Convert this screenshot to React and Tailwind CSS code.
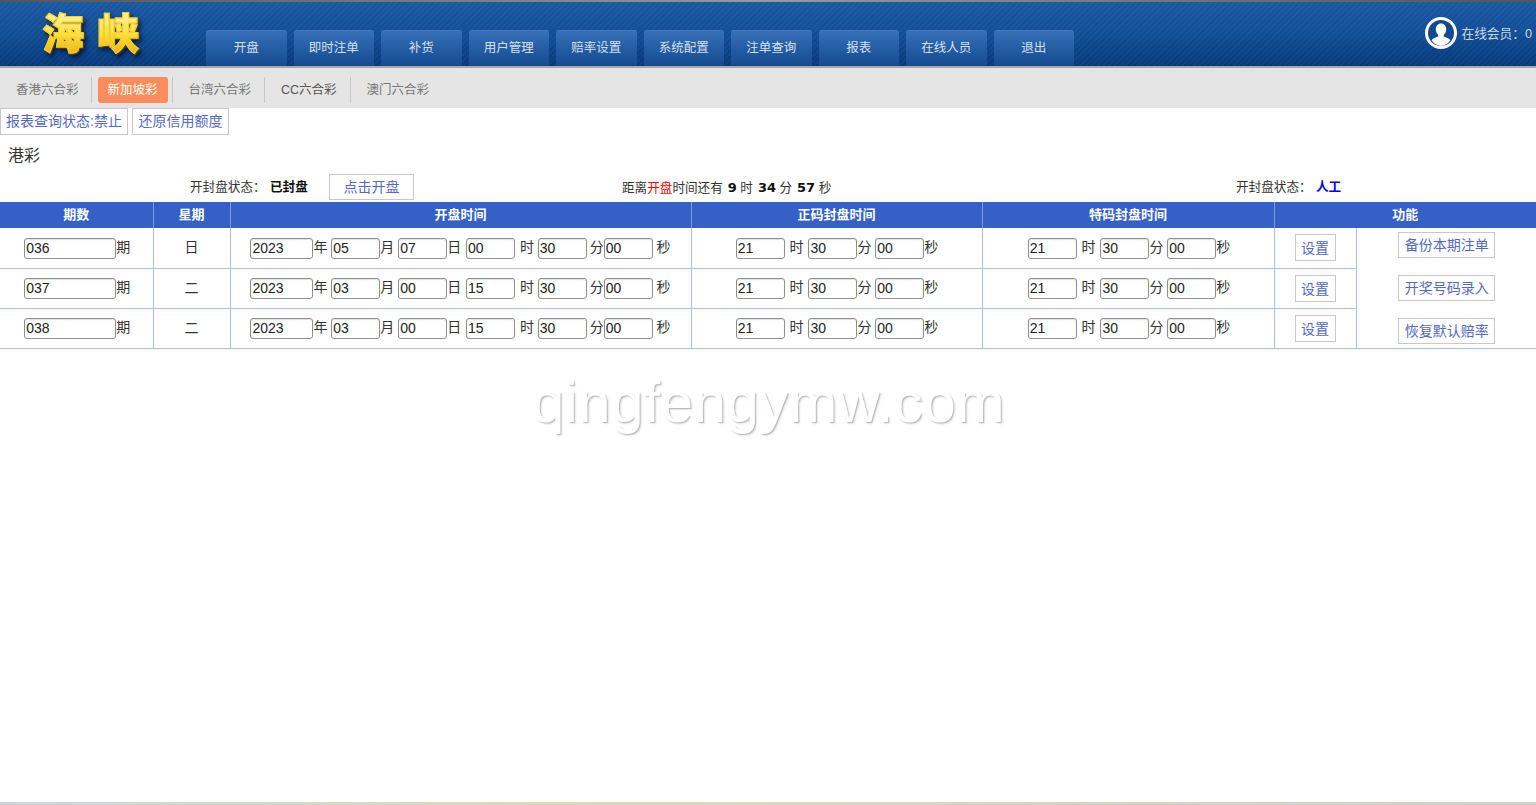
import React from 'react';

const navItems = ['开盘', '即时注单', '补货', '用户管理', '赔率设置', '系统配置', '注单查询', '报表', '在线人员', '退出'];

const lotteries = [
  { name: '香港六合彩', cls: 'ml-[16px] mr-[12px] text-[#777]' },
  { name: '新加坡彩', active: true },
  { name: '台湾六合彩', cls: 'ml-[16px] mr-[13px] text-[#777]' },
  { name: 'CC六合彩', cls: 'ml-[16px] mr-[13px] text-[#555]' },
  { name: '澳门六合彩', cls: 'ml-[16px] text-[#777]' },
];

const rows = [
  { no: '036', week: '日', year: '2023', month: '05', day: '07', hour: '00', action: '备份本期注单' },
  { no: '037', week: '二', year: '2023', month: '03', day: '00', hour: '15', action: '开奖号码录入' },
  { no: '038', week: '二', year: '2023', month: '03', day: '00', hour: '15', action: '恢复默认赔率' },
];

const cellBorder = 'border border-[#a9bff2] border-t-0 p-0 text-center align-middle';
const countdown = "font-['DejaVu_Sans'] text-[13px] text-[#111] ml-[1.5px]";

function Field({ value, width }) {
  return (
    <input
      readOnly
      value={value}
      className={`${width} h-[21px] rounded-[3px] border border-[#8f8f8f] bg-white px-[1px] align-middle text-[14px] text-[#222] shadow-[inset_0_1px_1px_rgba(0,0,0,0.12)] outline-none`}
    />
  );
}

function LinkButton({ children, cls }) {
  return (
    <span className={`inline-block border border-[#c8c8c8] bg-white text-center text-[14px] text-[#5468c8] ${cls}`}>
      {children}
    </span>
  );
}

function CloseTime() {
  return (
    <>
      <Field value="21" width="w-[49px]" /> <span className="mx-[1px]">时</span> <Field value="30" width="w-[49px]" />分{' '}
      <Field value="00" width="w-[49px]" />秒
    </>
  );
}

export default function App() {
  return (
    <div className="relative flex h-[805px] flex-col overflow-hidden bg-white font-['Liberation_Sans','Noto_Sans_CJK_SC',sans-serif] text-[14px] text-[#333]">
      {/* Header */}
      <div className="h-[2px] bg-gradient-to-r from-[#555] via-[#999] to-[#555]" />
      <header className="flex h-[64px] bg-[repeating-linear-gradient(135deg,rgba(255,255,255,0.025)_0_2px,rgba(0,0,0,0.025)_2px_4px),linear-gradient(180deg,#1a5aa6_0%,#124f98_50%,#063a7c_100%)]">
        <div className="w-[206px] shrink-0 pl-[42px] pt-[8px]">
          <span className="bg-gradient-to-b from-[#fff3a0] via-[#fbdf3a] to-[#e8a90c] bg-clip-text text-[42px] font-black leading-[50px] tracking-[13px] text-transparent [-webkit-text-stroke:1px_#f4cf2a] [filter:drop-shadow(1px_1px_0_#5a4310)_drop-shadow(2px_3px_2px_rgba(0,0,30,0.6))]">
            海峡
          </span>
        </div>
        <nav className="flex items-end gap-[7px]">
          {navItems.map((item) => (
            <div
              key={item}
              className="flex h-[36px] w-[80.5px] items-center justify-center rounded-t-[3px] border-t border-[#3f78bd] bg-gradient-to-b from-[#3670b7] to-[#134a90] text-[12.5px] text-[#d5e0ee]"
            >
              {item}
            </div>
          ))}
        </nav>
        <div className="ml-auto flex items-start pr-[4px] pt-[15px]">
          <svg width="32" height="32" viewBox="0 0 32 32" className="mr-[5px]">
            <circle cx="16" cy="16" r="14.5" fill="#13498f" stroke="#fff" strokeWidth="3" />
            <path
              d="M16 6.5c-3.2 0-5.2 2.5-5.2 5.8 0 2.4 1 4.4 2.4 5.7v1.6c-2.6 1-5.4 2-6.6 3.6A13 13 0 0 0 16 29a13 13 0 0 0 9.4-5.8c-1.2-1.6-4-2.6-6.6-3.6V18c1.4-1.3 2.4-3.3 2.4-5.7 0-3.3-2-5.8-5.2-5.8z"
              fill="#fff"
            />
          </svg>
          <span className="pt-[8px] text-[12.7px] text-[#c9d5e6]">在线会员：0</span>
        </div>
      </header>
      <div className="h-[2px] bg-[#a8a8a8]" />

      {/* Lottery tabs */}
      <div className="flex h-[40px] items-center bg-[#e5e5e5] pt-[4px] text-[12.5px]">
        {lotteries.map((l, i) => (
          <React.Fragment key={l.name}>
            {l.active ? (
              <span className="ml-[6px] mr-[4px] flex h-[26px] w-[70px] items-center justify-center rounded-[3px] bg-[#f98d5b] text-white">
                {l.name}
              </span>
            ) : (
              <span className={l.cls}>{l.name}</span>
            )}
            {i < lotteries.length - 1 && <span className="h-[26px] w-px bg-[#c8c8c8]" />}
          </React.Fragment>
        ))}
      </div>

      {/* Actions */}
      <div className="flex gap-[4px]">
        <LinkButton cls="h-[27px] w-[128px] leading-[25px]">报表查询状态:禁止</LinkButton>
        <LinkButton cls="h-[27px] w-[97px] leading-[25px]">还原信用额度</LinkButton>
      </div>
      <div className="pl-[8px] pt-[9px] text-[16px] leading-[24px] text-[#333]">港彩</div>

      {/* Status row */}
      <div className="mt-[6px] flex h-[26px] items-center text-[12.6px]">
        <span className="ml-[190px] w-[80px] pt-[1px]">开封盘状态：</span>
        <span className="w-[59px] pt-[1px] font-bold text-[#111]">已封盘</span>
        <LinkButton cls="h-[26px] w-[85px] leading-[24px]">点击开盘</LinkButton>
        <span className="ml-[208px] w-[614px] pt-[1px]">
          距离<span className="text-[#f00]">开盘</span>时间还有 <b className={countdown}>9</b> 时{' '}
          <b className={countdown}>34</b> 分 <b className={countdown}>57</b> 秒
        </span>
        <span className="w-[80px] pt-[1px]">开封盘状态：</span>
        <span className="pt-[1px] font-bold text-[#0000f0]">人工</span>
      </div>

      {/* Schedule table */}
      <table className="mt-[2px] w-[1536px] table-fixed border-collapse">
        <colgroup>
          <col className="w-[153px]" />
          <col className="w-[77px]" />
          <col className="w-[461px]" />
          <col className="w-[291px]" />
          <col className="w-[292px]" />
          <col className="w-[82px]" />
          <col className="w-[180px]" />
        </colgroup>
        <thead>
          <tr className="h-[26px] bg-[#3560c6] text-[13px] font-bold text-white">
            <th className="border-r border-[#7f9be0] p-0">期数</th>
            <th className="border-r border-[#7f9be0] p-0">星期</th>
            <th className="border-r border-[#7f9be0] p-0">开盘时间</th>
            <th className="border-r border-[#7f9be0] p-0">正码封盘时间</th>
            <th className="border-r border-[#7f9be0] p-0">特码封盘时间</th>
            <th colSpan={2} className="p-0">功能</th>
          </tr>
        </thead>
        <tbody>
          {rows.map((row, i) => (
            <tr key={row.no} className="h-[40px]">
              <td className={`${cellBorder} border-l-0 pl-[2px]`}>
                <Field value={row.no} width="w-[92px]" />期
              </td>
              <td className={cellBorder}>{row.week}</td>
              <td className={cellBorder}>
                <Field value={row.year} width="w-[63px]" />年 <Field value={row.month} width="w-[49px]" />月{' '}
                <Field value={row.day} width="w-[49px]" />
                <span className="mr-[1px]">日</span> <Field value={row.hour} width="w-[49px]" />{' '}
                <span className="ml-[1px]">时</span> <Field value="30" width="w-[49px]" />{' '}
                <span className="ml-[-1px]">分</span>
                <Field value="00" width="w-[49px]" /> 秒
              </td>
              <td className={`${cellBorder} pl-[1px]`}>
                <CloseTime />
              </td>
              <td className={`${cellBorder} pl-[2px]`}>
                <CloseTime />
              </td>
              <td className={cellBorder}>
                <LinkButton cls="h-[27px] w-[41px] align-middle leading-[26px]">设置</LinkButton>
              </td>
              {i === 0 && (
                <td rowSpan={3} className={`${cellBorder} border-r-0`}>
                  <div className="flex flex-col items-center gap-[17px] pl-[1px]">
                    {rows.map((r) => (
                      <LinkButton key={r.action} cls="h-[26px] w-[97px] leading-[24px]">
                        {r.action}
                      </LinkButton>
                    ))}
                  </div>
                </td>
              )}
            </tr>
          ))}
        </tbody>
      </table>

      {/* Watermark */}
      <div className="absolute left-[532px] top-[368px] font-['Liberation_Sans'] text-[58px] leading-[68px] tracking-[0.6px] text-white [text-shadow:1px_1px_1px_rgba(0,0,0,0.2),2px_2px_2px_rgba(0,0,0,0.1)]">
        qingfengymw.com
      </div>

      <div className="mt-auto h-[3px] bg-gradient-to-r from-[#d0d4dc] via-[#d9dcb8] via-35% to-[#d0d0cc]" />
    </div>
  );
}
